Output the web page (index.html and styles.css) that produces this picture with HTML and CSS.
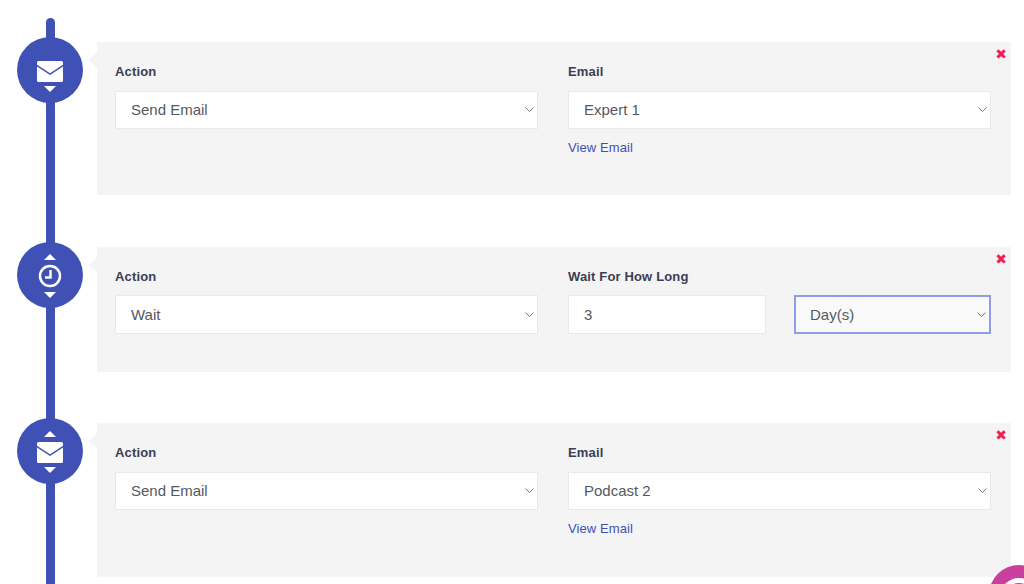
FILE: index.html
```html
<!DOCTYPE html>
<html lang="en">
<head>
<meta charset="utf-8">
<title>Automation steps</title>
<link rel="stylesheet" href="styles.css">
</head>
<body>
<main class="timeline">
  <div class="rail"></div>

  <section class="step step-email">
    <div class="marker">
      <span class="arrow-slot"></span>
      <svg class="icon-mail" viewBox="0 0 26 21"><path d="M1.500 0h23A1.500 1.500 0 0 1 26 1.500v2.300L13 12.300 0 3.800V1.500A1.500 1.500 0 0 1 1.500 0z"/><path d="M0 5.500l13 8.500 13-8.500v14A1.500 1.500 0 0 1 24.500 21h-23A1.500 1.500 0 0 1 0 19.500z"/></svg>
      <span class="arrow down"></span>
    </div>
    <div class="card">
      <span class="remove">✖</span>
      <div class="field">
        <label class="label">Action</label>
        <select class="control"><option>Send Email</option></select>
      </div>
      <div class="field">
        <label class="label">Email</label>
        <select class="control"><option>Expert 1</option></select>
        <a class="link" href="#">View Email</a>
      </div>
    </div>
  </section>

  <section class="step step-wait">
    <div class="marker">
      <span class="arrow up"></span>
      <svg class="icon-clock" viewBox="0 0 24 24"><circle cx="12" cy="12" r="10" /><path d="M12.500 6v7.500H7"/></svg>
      <span class="arrow down"></span>
    </div>
    <div class="card">
      <span class="remove">✖</span>
      <div class="field">
        <label class="label">Action</label>
        <select class="control"><option>Wait</option></select>
      </div>
      <div class="field">
        <label class="label">Wait For How Long</label>
        <div class="pair">
          <input class="control" value="3">
          <select class="control focused"><option>Day(s)</option></select>
        </div>
      </div>
    </div>
  </section>

  <section class="step step-email">
    <div class="marker">
      <span class="arrow up"></span>
      <svg class="icon-mail" viewBox="0 0 26 21"><path d="M1.500 0h23A1.500 1.500 0 0 1 26 1.500v2.300L13 12.300 0 3.800V1.500A1.500 1.500 0 0 1 1.500 0z"/><path d="M0 5.500l13 8.500 13-8.500v14A1.500 1.500 0 0 1 24.500 21h-23A1.500 1.500 0 0 1 0 19.500z"/></svg>
      <span class="arrow down"></span>
    </div>
    <div class="card">
      <span class="remove">✖</span>
      <div class="field">
        <label class="label">Action</label>
        <select class="control"><option>Send Email</option></select>
      </div>
      <div class="field">
        <label class="label">Email</label>
        <select class="control"><option>Podcast 2</option></select>
        <a class="link" href="#">View Email</a>
      </div>
    </div>
  </section>
</main>
<div class="chat"><span class="chat-ring"></span></div>
</body>
</html>
```

FILE: styles.css
```css
* { box-sizing: border-box; }

html, body { height: 100%; }

body {
  margin: 0;
  background: #fff;
  overflow: hidden;
  font-family: "Liberation Sans", Arial, sans-serif;
  color: #3b3e52;
}

.timeline {
  position: relative;
  height: 584px;
  padding: 42px 13px 0 17px;
  display: flex;
  flex-direction: column;
  gap: 51.4px;
}

.rail {
  position: absolute;
  left: 46px;
  top: 18px;
  bottom: 0;
  width: 9px;
  background: #3f51b5;
  border-radius: 5px 5px 0 0;
}

.step {
  position: relative;
  display: flex;
  gap: 14px;
  align-items: flex-start;
}

.marker {
  width: 66px;
  height: 66px;
  margin-top: -5px;
  padding-top: 2px;
  flex: none;
  border-radius: 50%;
  background: #3f51b5;
  display: flex;
  flex-direction: column;
  align-items: center;
  justify-content: center;
  gap: 4px;
  position: relative;
}

.arrow-slot { height: 6px; }

.arrow {
  width: 0;
  height: 0;
  border-left: 6px solid transparent;
  border-right: 6px solid transparent;
}
.arrow.up { border-bottom: 6px solid #fff; }
.arrow.down { border-top: 6px solid #fff; }

.icon-mail { width: 26px; height: 21px; margin-top: 1px; fill: #fff; }

.icon-clock {
  width: 24px;
  height: 24px;
  fill: none;
  stroke: #fff;
  stroke-width: 2.500;
}

.card {
  position: relative;
  flex: 1;
  background: #f4f4f4;
  padding: 22px 20px 0 18px;
  display: grid;
  grid-template-columns: 423px 423px;
  column-gap: 30px;
}

.card::before {
  content: "";
  position: absolute;
  left: -8px;
  top: 10px;
  width: 0;
  height: 0;
  border-top: 8px solid transparent;
  border-bottom: 8px solid transparent;
  border-right: 8px solid #f4f4f4;
}

.step-email .card { height: 153.4px; }
.step-wait .card { height: 125px; }

.label {
  display: block;
  font-size: 13px;
  line-height: 15px;
  font-weight: 700;
  letter-spacing: 0.15px;
  margin-bottom: 11.5px;
}

.control {
  display: block;
  width: 100%;
  height: 38.5px;
  padding: 0 15px;
  background-color: #fff;
  border: 1px solid #e9e9ea;
  border-radius: 0;
  font-family: inherit;
  font-size: 15px;
  color: #55595f;
  outline: none;
}

select.control {
  appearance: none;
  -webkit-appearance: none;
  background-image: url("data:image/svg+xml,%3Csvg xmlns='http://www.w3.org/2000/svg' width='9' height='5'%3E%3Cpath d='M.5.5l4 4 4-4' fill='none' stroke='%23777' stroke-width='1'/%3E%3C/svg%3E");
  background-repeat: no-repeat;
  background-position: right 3px center;
}

.control.focused {
  background-color: #f9f9f9;
  border: 2px solid #8f9de6;
  padding: 0 14px;
}

.pair {
  display: grid;
  grid-template-columns: 198px 197px;
  column-gap: 28px;
}

.link {
  display: block;
  margin-top: 10.5px;
  font-size: 13px;
  line-height: 15px;
  letter-spacing: 0.1px;
  color: #3f51b5;
  text-decoration: none;
}

.remove {
  position: absolute;
  top: 5px;
  right: 4px;
  font-size: 14px;
  line-height: 14px;
  color: #f01d5d;
  font-family: "DejaVu Sans", sans-serif;
}

.chat {
  position: fixed;
  left: 989px;
  top: 565px;
  width: 60px;
  height: 60px;
  border-radius: 50%;
  background: #c8409c;
}

.chat-ring {
  position: absolute;
  left: 11px;
  top: 13px;
  width: 38px;
  height: 38px;
  border-radius: 50%;
  border: 5px solid #fff;
}
```
